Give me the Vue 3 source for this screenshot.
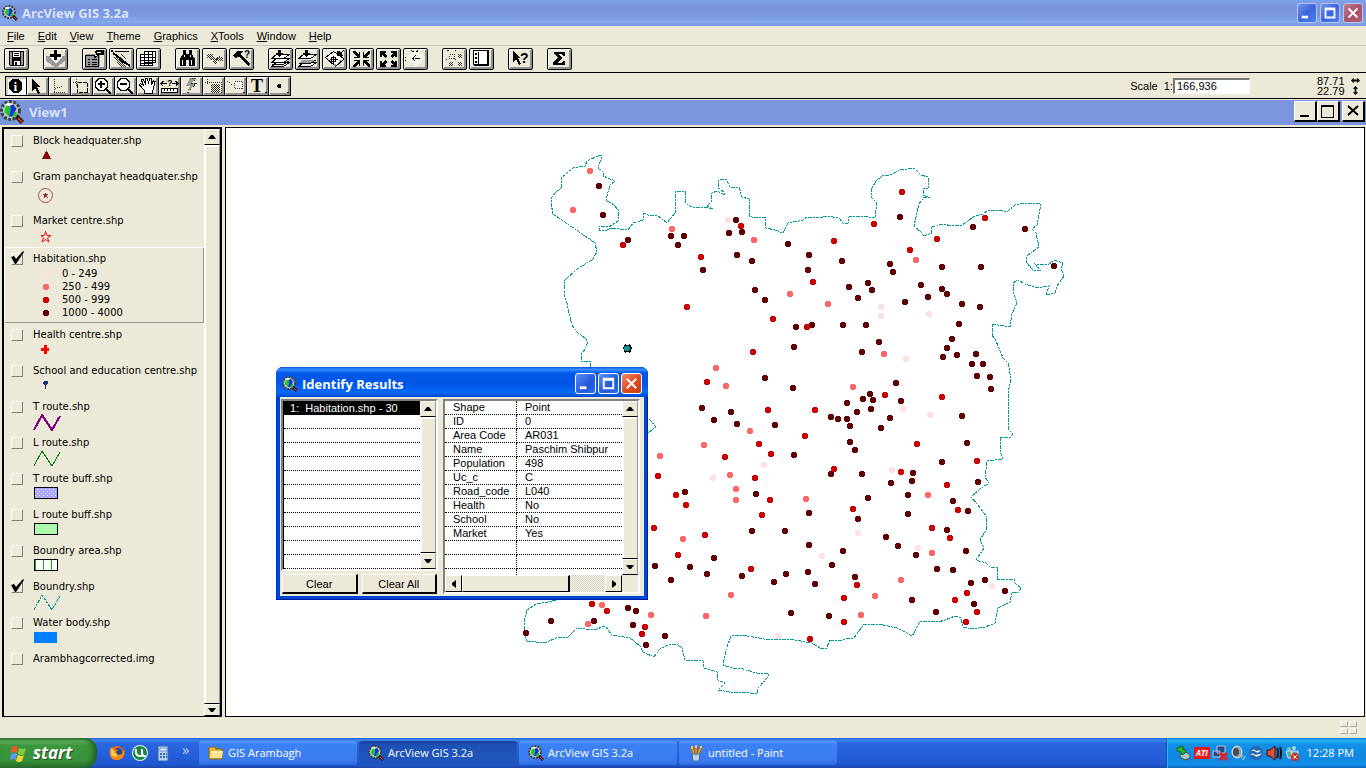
<script setup>
import { ref } from 'vue'

const menus = ['File', 'Edit', 'View', 'Theme', 'Graphics', 'XTools', 'Window', 'Help']

// Each shape is [class, path data]; classes: s line, m thick line, b solid, w outlined white, g dotted grey line, q grey solid, h hatched
const buttonGroups = [
  [{ name: 'Save Project', p: [['b', 'M4 2h15v15H5l-1-1z'], ['q', 'M5 3h2v13H5zM16 3h2v13h-2z'], ['wf', 'M8 3h7v5H8zM9 12h6v4H9z'], ['b', 'M9 4h5v1H9zM9 6h5v1H9zM10 13h2v3h-2z']] }],
  [{ name: 'Add Theme', p: [['q', 'M2 7h4l6 6 6-6h3v5l-9 7-10-7z'], ['wf', 'M5 8l7 6 6-6-1-2H7z'], ['b', 'M10 1h3v4h4v3h-4v3h-3V8H6V5h4z']] }],
  [
    { name: 'Theme Properties', p: [['q', 'M3 5h14v12H3z'], ['s', 'M2.5 6.5h13v11h-13zM5 10.5h2M9 10.5h5M5 13.5h2M9 13.5h5M5 15.5h2M9 15.5h5'], ['b', 'M11 3l3-2h7v5h-6l-1 2-3 1V6h2V4z'], ['wf', 'M14 3h4v1h-4zM12 6h2v1h-2z']] },
    { name: 'Edit Legend', p: [['s', 'M1.5 1.5h1v1h-1zM5 2.5h14'], ['h', 'M3 8h3l11 10h-6zM10 5h3l4 5h-3z'], ['m', 'M3 4L20 17'], ['b', 'M8 8l5 3 2 4-5-3z']] },
    { name: 'Open Theme Table', p: [['w', 'M7.5 2.5h11v11h-11zM3.5 5.5h12v11h-12z'], ['s', 'M4 8.5h15M4 11.5h15M4 14.5h12M7.5 5v12M11.5 3v14M15.5 3v14']] }
  ],
  [
    { name: 'Find', p: [['b', 'M7 1h3v4h3V1h3v4l3 5v7h-6v-6h-3v6H4v-7l3-5z'], ['wf', 'M6 11h1v5H6zM15 11h1v5h-1zM8 6h1v2H8zM14 6h1v2h-1z']] },
    { name: 'Locate Address', p: [['h', 'M4 5h6v4H4zM7 8h4v3H7zM10 9h4v4l-2 2-2-3zM14 8h6v4h-4l-2-1z'], ['g', 'M5.5 5.5l6 6 7-5']] },
    { name: 'Query Builder', p: [['b', 'M3 6l4-4h6l-2 2v2l9 9-2 2-9-9-4 1z'], ['t', '?', 14, 9, 10]] }
  ],
  [
    { name: 'Zoom to Full Extent', p: [['w', 'M2.5 17.5l5-4h13l-6 4zM2.5 13.5l5-4h13l-6 4zM2.5 9.5l5-4h13l-6 4z'], ['s', 'M2.5 15.5h12l6-4'], ['b', 'M9 1h3v3h3l-5 4-4-4h3z']] },
    { name: 'Zoom to Active Theme', p: [['w', 'M2.5 17.5l5-4h13l-6 4zM2.5 9.5l5-4h13l-6 4z'], ['q', 'M3 14l4-3h13l-5 3z'], ['s', 'M2.5 14.5h12l6-4'], ['b', 'M9 1h3v3h3l-5 4-4-4h3z']] },
    { name: 'Zoom to Selected', p: [['w', 'M2.5 8.5l8-6 3 2 7 5v1l-8 7z'], ['q', 'M4 9h2v1H4zM16 11h3v1h-3zM11 15h2v2h-2z'], ['s', 'M8.5 8.5h4v4h-4zM10.5 7v8M7 10.5h8'], ['b', 'M14 2h2l2 1 3-2-2 3 1 3h-6z']] },
    { name: 'Zoom In', p: [['b', 'M3 2h2l4 4V3h1v6H4V8h3L3 4zM20 2h-2l-4 4V3h-1v6h6V8h-3l4-4zM3 18h2l4-4v3h1v-6H4v1h3l-4 4zM20 18h-2l-4-4v3h-1v-6h6v1h-3l4 4z']] },
    { name: 'Zoom Out', p: [['b', 'M3 2h6v2H7l3 3-2 2-3-3v2H3zM20 2h-6v2h2l-3 3 2 2 3-3v2h2zM3 18h6v-2H7l3-3-2-2-3 3v-2H3zM20 18h-6v-2h2l-3-3 2-2 3 3v-2h2z']] },
    { name: 'Zoom to Previous', p: [['hw', 'M2 9l7-6h6l6 6-8 9h-3z'], ['s', 'M7.5 1.5l3 2M12.5 2.5l2-1M8 9.5h2M11 9.5h5M11.5 6.5l-3 3 3 3M1.5 8v1M1.5 11v1']] }
  ],
  [
    { name: 'Select Features Using Shape', p: [['g', 'M6.5 5.5h5v4h-5z'], ['h', 'M15 5h4v4h-4zM6 13h4v4H6zM15 13h4v4h-4z'], ['s', 'M4 1.5h2M12 1.5h1M3.5 10v1M12.5 10v1']] },
    { name: 'Clear Selected Features', p: [['b', 'M3 1h16v16H5l-2-1z'], ['wf', 'M4 2h13v13H4z'], ['b', 'M5 4h2v2H5zM5 8h2v2H5zM5 12h2v2H5zM8 3h1v12H8z']] }
  ],
  [{ name: 'Help', p: [['b', 'M4 2l8 7H9l3 6-2 1-3-6-3 3z'], ['t', '?', 11, 14, 14]] }],
  [{ name: 'Summarize', p: [['b', 'M6 3h11v4h-2l-1-2h-4l4 4-4 5h4l1-2h2v4H5v-3l5-4-4-4z']] }]
]

const tools = [
  { name: 'Identify', on: true, p: [['b', 'M7 2h6l4 4v6l-4 4H7l-4-4V6z'], ['ti', 'i', 8, 14, 14]] },
  { name: 'Pointer', p: [['b', 'M5 2l9 8h-4l3 6-2 1-3-6-3 3z']] },
  { name: 'Vertex Edit', p: [['g', 'M5.5 2v13M6 11.5l7-2M5 15.5h12']] },
  { name: 'Select Feature', p: [['g', 'M2 5.5h6M5.5 2v8'], ['d', 'M6.5 5.5h10v10h-10z']] },
  { name: 'Zoom In Tool', p: [['w', 'M6 1.5h5l3.5 3.5v5L11 13.5H6L2.5 10V5z'], ['m', 'M5 7h7M8 4v7M13 12l5 5']] },
  { name: 'Zoom Out Tool', p: [['w', 'M6 1.5h5l3.5 3.5v5L11 13.5H6L2.5 10V5z'], ['m', 'M5 7h7M13 12l5 5']] },
  { name: 'Pan', p: [['w', 'M7.5 16.5v-3L2.5 8l1-1.5 3 2L4.5 3l2-.5 2 5V1h2l1 6 1-5.5h2v6l2-4 1.5 1-3 12.5z']] },
  { name: 'Measure', p: [['w', 'M2.5 11.5h16v4h-16z'], ['s', 'M5.5 12v2M8.5 12v2M11.5 12v2M14.5 12v2M2 6.5h6M13 6.5h6M4.5 4L2 6.5l2.5 3M16.5 4L19 6.5l-2.5 3'], ['t', '?', 8, 9, 9]] },
  { name: 'Hot Link', p: [['q', 'M9 1h6l-4 5h4l-9 10 3-7H5z'], ['g', 'M9 1.5h6l-4 5h4l-9 10']] },
  { name: 'Select by Area', p: [['h', 'M8 7h9v9H8z'], ['g', 'M2 5.5h16M4.5 2v6M18.5 5v11']] },
  { name: 'Label', p: [['hw', 'M9 5h8v7H9z'], ['g', 'M2.5 4.5l6 4M9.5 4.5h8v7h-8z'], ['b', 'M17 15h3l-1 1h-1z']] },
  { name: 'Text', p: [['ts', 'T', 4, 15, 18], ['b', 'M17 15h3l-1 1h-1z']] },
  { name: 'Draw Point', p: [['b', 'M9 7h2l1 1v2l-1 1H9l-1-1V8zM17 15h3l-1 1h-1z']] }
]

const layers = ref([
  { name: 'Block headquater.shp', on: false, sym: 'triangle' },
  { name: 'Gram panchayat headquater.shp', on: false, sym: 'ring', size: 'tall' },
  { name: 'Market centre.shp', on: false, sym: 'star', size: 'mid' },
  { name: 'Habitation.shp', on: true, active: true, size: 'classes' },
  { name: 'Health centre.shp', on: false, sym: 'cross' },
  { name: 'School and education centre.shp', on: false, sym: 'pin' },
  { name: 'T route.shp', on: false, sym: 'zig', color: 'purple' },
  { name: 'L route.shp', on: false, sym: 'zig', color: 'green' },
  { name: 'T route buff.shp', on: false, sym: 'box', color: 'violet' },
  { name: 'L route buff.shp', on: false, sym: 'box', color: 'lime' },
  { name: 'Boundry area.shp', on: false, sym: 'box', color: 'bars' },
  { name: 'Boundry.shp', on: true, sym: 'zig', color: 'teal' },
  { name: 'Water body.shp', on: false, sym: 'water' },
  { name: 'Arambhagcorrected.img', on: false }
])

const classes = [['l', '0 - 249'], ['p', '250 - 499'], ['r', '500 - 999'], ['k', '1000 - 4000']]

// Habitations by population class, "x,y" in window coordinates
const habitations = {
  l: '728,220 881,307 881,316 929,314 906,359 903,409 713,478 764,465 858,533 822,556 778,636 930,415 892,470 918,548 992,586',
  p: '590,171 573,210 672,229 754,240 790,294 716,368 726,386 916,260 828,304 884,354 853,387 750,431 704,445 660,456 730,475 736,489 736,500 806,499 683,539 731,595 706,616 651,615 861,615 875,596 928,495 932,553 901,580 602,605 588,624',
  k: '599,186 603,215 628,240 671,236 684,236 678,245 703,270 736,220 729,233 742,232 737,255 752,261 755,290 765,300 788,244 796,327 794,347 765,378 793,388 900,217 809,255 842,261 808,270 890,264 893,272 973,227 1025,229 942,267 981,267 1054,266 849,287 868,283 872,290 858,298 921,285 928,297 942,289 947,294 905,302 962,304 980,307 959,324 812,325 843,325 866,325 879,342 862,352 952,339 947,348 943,357 957,355 976,354 972,364 983,364 977,376 990,377 991,389 870,394 863,399 873,400 847,403 896,383 901,401 871,409 702,408 714,420 731,412 737,424 775,425 756,494 752,531 831,417 838,419 847,419 850,426 857,412 850,442 855,450 794,455 831,474 862,474 809,513 785,531 809,545 868,498 858,519 843,551 832,565 808,572 815,584 786,574 774,582 742,576 714,558 707,574 690,567 685,492 655,566 671,580 665,636 646,645 791,613 829,616 855,577 890,418 881,428 962,416 967,443 942,462 913,473 912,481 891,483 908,495 978,482 953,501 968,511 908,514 947,530 966,551 916,555 886,537 898,546 937,569 953,570 971,583 985,580 1005,591 974,604 936,612 912,600 594,621 551,621 526,633 628,608 636,611 633,625',
  r: '623,245 701,257 687,307 741,226 773,319 753,352 707,382 902,192 874,224 834,241 813,282 910,250 937,239 985,218 807,327 885,395 942,397 815,410 768,410 759,444 771,454 725,457 658,476 755,478 770,500 762,515 805,436 834,469 853,509 751,569 678,555 705,535 676,495 686,505 654,528 645,627 642,634 844,598 844,622 857,585 810,639 977,461 917,444 901,472 947,485 958,510 932,528 950,538 967,593 977,612 966,622 955,600 592,604 607,611'
}
const points = Object.entries(habitations).flatMap(([k, list]) =>
  list.split(' ').map((xy) => {
    const [x, y] = xy.split(',').map(Number)
    return { k, d: `M${x - 2} ${y - 3}h4v1h1v4h-1v1h-4v-1h-1v-4h1z` }
  })
)

const boundary =
  '590,367 590,361 581,361 581,355 585,349 588,342 585,338 578,333 572,325 569,313 567,303 564,294 565,280 577,269 592,260 597,252 595,243 588,238 553,214 551,203 551,198 557,191 562,188 561,178 573,168 585,166 587,161 600,155 602,156 598,168 603,172 603,176 608,178 615,181 610,185 606,200 614,205 619,211 618,221 609,227 599,226 599,230 607,230 612,228 628,230 633,223 643,220 644,213 648,215 657,215 667,223 675,213 676,191 685,191 685,202 688,205 692,207 705,207 713,209 707,206 711,202 712,193 717,191 725,195 724,192 718,188 719,180 726,179 730,187 739,187 742,197 749,199 749,216 755,218 765,217 766,228 775,230 783,233 788,223 799,221 803,220 807,217 818,218 827,216 839,218 843,223 848,223 849,217 860,216 875,218 877,203 871,197 871,189 877,180 884,175 890,175 900,170 914,168 921,175 928,177 928,188 923,189 923,195 930,198 924,197 919,204 914,226 921,232 923,236 932,233 931,227 942,224 953,226 962,225 975,216 983,214 988,210 1003,211 1008,211 1015,205 1025,203 1041,204 1037,225 1032,229 1036,233 1039,247 1027,256 1026,262 1033,270 1040,270 1035,264 1048,265 1054,260 1063,263 1061,268 1064,276 1057,286 1055,293 1046,295 1049,286 1037,288 1025,284 1018,280 1013,283 1014,294 1017,303 1012,314 1010,327 992,324 992,335 996,341 1003,358 1008,363 1011,379 1008,393 1009,430 1013,434 1010,438 1000,437 1000,452 1003,459 987,461 985,477 989,483 980,489 971,497 977,504 987,517 986,530 980,540 984,548 976,560 986,563 990,567 998,567 997,580 1014,579 1015,583 1021,588 1019,592 1012,593 1010,602 998,608 995,623 985,627 973,629 963,627 961,618 955,616 945,620 938,622 920,621 914,633 912,636 905,632 897,628 883,625 864,624 854,638 847,638 840,641 830,640 826,649 820,648 812,643 795,640 780,639 770,640 753,637 741,635 731,636 726,650 723,665 732,668 739,668 757,673 767,673 769,676 758,688 757,694 740,692 729,692 718,690 725,683 718,680 717,672 704,668 703,661 685,660 682,648 677,644 668,645 660,649 654,657 643,652 640,646 630,638 612,635 605,626 594,630 577,628 568,637 556,638 545,643 527,641 524,634 524,622 527,610 536,604 548,602 560,599'

const attributes = [
  ['Shape', 'Point'], ['ID', '0'], ['Area Code', 'AR031'], ['Name', 'Paschim Shibpur'], ['Population', '498'],
  ['Uc_c', 'C'], ['Road_code', 'L040'], ['Health', 'No'], ['School', 'No'], ['Market', 'Yes'], ['', ''], ['', '']
]
const scale = ref('166,936')
const tasks = [
  { name: 'GIS Arambagh', icon: 'folder' },
  { name: 'ArcView GIS 3.2a', icon: 'logo', on: true },
  { name: 'ArcView GIS 3.2a', icon: 'logo' },
  { name: 'untitled - Paint', icon: 'paint' }
]
</script>

<template>
  <div class="desktop">
    <svg class="defs" aria-hidden="true">
      <defs>
        <pattern id="dots" width="2" height="2" patternUnits="userSpaceOnUse"><path d="M0 0h1v1H0zM1 1h1v1H1z" fill="#333" /></pattern>
        <pattern id="dotsw" width="2" height="2" patternUnits="userSpaceOnUse"><path d="M0 0h1v1H0zM1 1h1v1H1z" fill="#fff" /></pattern>
        <pattern id="speck" width="4" height="4" patternUnits="userSpaceOnUse"><path d="M0 0h1v1H0zM2 2h1v1H2z" fill="#fff" /></pattern>
      </defs>
      <symbol id="logo" viewBox="0 0 16 16">
        <circle cx="7" cy="7" r="6" fill="#b8c4c4" stroke="#3b4440" stroke-width="2" stroke-dasharray="2 1" />
        <path d="M4 4h3v3l-1 4-3-3zM9 8h2v3H8z" fill="#19c82e" /><path d="M7 3h2l2 3-2 3-1 2H6l1-4z" fill="#1030d8" /><path d="M3 3l2-1 4 1-4 1z" fill="#fff" />
        <path d="M11 11l4 4" stroke="#301818" stroke-width="3" /><path d="M12 12l3 3" stroke="#d84020" stroke-width="1" />
      </symbol>
      <symbol id="folder" viewBox="0 0 16 16"><path d="M1 3l1-1h5l1 2h6v10H2l-1-1z" fill="#e7b63b" stroke="#8a6410" /><path d="M2 13l1-7h12l-1 7z" fill="#ffe58a" /><path d="M3 7h11" stroke="#fff7c8" /></symbol>
      <symbol id="paint" viewBox="0 0 16 16"><path d="M4 9h8l-1 7H5z" fill="#bcd5ed" stroke="#496482" /><path d="M5 9L3 3l2-1 2 6M7 8V2h2v6M9 8l3-6 2 1-3 6" fill="#e8a534" stroke="#a8691d" /><path d="M3 1h2v3H3zM7 0h2v3H7zM12 1h2v2h-2z" fill="#f0c060" /></symbol>
    </svg>

    <header class="titlebar">
      <svg class="logo16"><use href="#logo" /></svg>
      <h1>ArcView GIS 3.2a</h1>
      <div class="winbtns">
        <button class="xp" aria-label="Minimize"><svg viewBox="0 0 20 20"><path d="M4 13h7v3H4z" /></svg></button>
        <button class="xp" aria-label="Maximize"><svg viewBox="0 0 20 20"><path d="M4 4h12v12H4zM6 7v7h8V7z" fill-rule="evenodd" /></svg></button>
        <button class="xp close" aria-label="Close"><svg viewBox="0 0 20 20"><path d="M5 5l10 10M15 5L5 15" class="x" /></svg></button>
      </div>
    </header>

    <nav class="menu"><a v-for="m in menus" :key="m" href="#"><u>{{ m[0] }}</u>{{ m.slice(1) }}</a></nav>

    <div class="toolbar">
      <div v-for="(g, i) in buttonGroups" :key="i" class="group">
        <button v-for="b in g" :key="b.name" class="tb" :aria-label="b.name">
          <svg viewBox="0 0 23 20">
            <template v-for="(s, j) in b.p" :key="j">
              <text v-if="s[0] === 't'" :x="s[2]" :y="s[3]" :font-size="s[4]">{{ s[1] }}</text>
              <path v-else :class="s[0]" :d="s[1]" />
            </template>
          </svg>
        </button>
      </div>
    </div>

    <div class="toolrow">
      <div class="tools">
        <button v-for="b in tools" :key="b.name" class="tool" :class="{ on: b.on }" :aria-label="b.name">
          <svg viewBox="0 0 21 18">
            <template v-for="(s, j) in b.p" :key="j">
              <text v-if="s[0][0] === 't'" :class="s[0]" :x="s[2]" :y="s[3]" :font-size="s[4]">{{ s[1] }}</text>
              <path v-else :class="s[0]" :d="s[1]" />
            </template>
          </svg>
        </button>
      </div>
      <label for="scale">Scale&nbsp; 1:</label>
      <input id="scale" v-model="scale" class="scale" type="text" />
      <div class="coords">
        <span>87.71</span><svg viewBox="0 0 10 10"><path d="M0 5l3-3v2h4V2l3 3-3 3V6H3v2z" /></svg>
        <span>22.79</span><svg viewBox="0 0 10 10"><path d="M5 0l3 3H6v4h2l-3 3-3-3h2V3H2z" /></svg>
      </div>
    </div>

    <div class="docbar">
      <svg class="logo24"><use href="#logo" /></svg>
      <h2>View1</h2>
      <div class="docbtns">
        <button aria-label="Minimize view"><svg viewBox="0 0 20 18"><path d="M5 13h9v2H5z" /></svg></button>
        <button aria-label="Maximize view"><svg viewBox="0 0 20 18"><path d="M3 3h13v13H3zM4 5v10h11V5z" fill-rule="evenodd" /></svg></button>
        <button aria-label="Close view"><svg viewBox="0 0 20 18"><path d="M5 4l10 9M15 4L5 13" stroke="#000" stroke-width="2" /></svg></button>
      </div>
    </div>

    <main class="doc">
      <aside class="toc">
        <ul>
          <li v-for="(l, i) in layers" :key="l.name" :class="[l.size, { active: l.active }]">
            <span class="tick">
              <input :id="'layer' + i" v-model="l.on" type="checkbox" />
              <svg v-if="l.on" viewBox="0 0 15 14"><path d="M1 6l3-1 2 3 7-8 1 1-8 12H5z" /></svg>
            </span>
            <div class="info">
              <label :for="'layer' + i">{{ l.name }}</label>
              <svg v-if="l.sym" class="sym" viewBox="0 0 30 20">
                <path v-if="l.sym === 'triangle'" d="M13 4L9 12h9l-4-8z" fill="#8a0808" />
                <g v-if="l.sym === 'ring'"><circle cx="12.5" cy="9.5" r="7" fill="none" stroke="#a65050" shape-rendering="auto" /><path d="M12 7h1v1h2l-1 2 1 2-2-1-2 1v-2L9 8h3z" fill="#8c3030" /></g>
                <path v-if="l.sym === 'star'" d="M12.5 4.5l1.5 4h4l-3.5 2.5 1.5 4-3.5-2.5L9 15l1.5-4L8 8.500h3.500z" fill="none" stroke="#e01010" shape-rendering="auto" />
                <path v-if="l.sym === 'cross'" d="M11 4h3v3h2v3h-2v3h-3v-3H8V7h3z" fill="#f00" />
                <path v-if="l.sym === 'pin'" d="M11 4h3l1 1v2l-2 1v4h-1V8l-2-1V5z" fill="#1d2f80" />
                <path v-if="l.sym === 'zig'" :class="l.color" d="M1 17L9 2l10 15 8-14" />
                <g v-if="l.sym === 'box'">
                  <path d="M1.5 2.5h23v11h-23z" :class="l.color" stroke="#000" />
                  <path v-if="l.color !== 'bars'" d="M2 3h22v10H2z" fill="url(#speck)" />
                  <path v-else d="M2.5 3v10M10.5 3v10M18.5 3v10" stroke="#00c000" />
                </g>
                <path v-if="l.sym === 'water'" d="M1 3h23v11H1z" fill="#0080ff" />
              </svg>
              <dl v-if="l.active">
                <div v-for="c in classes" :key="c[1]">
                  <dt><svg viewBox="0 0 6 6"><path :class="c[0]" d="M1 0h4v1h1v4H5v1H1V5H0V1h1z" /></svg></dt>
                  <dd>{{ c[1] }}</dd>
                </div>
              </dl>
            </div>
          </li>
        </ul>
        <div class="vscroll">
          <button aria-label="Scroll legend up"><svg viewBox="0 0 8 4"><path d="M3 0h2l3 4H0z" /></svg></button>
          <div class="thumb"></div>
          <button class="cut" aria-label="Scroll legend down"><svg viewBox="0 0 8 4"><path d="M0 0h8L5 4H3z" /></svg></button>
        </div>
      </aside>

      <section class="map" aria-label="Map">
        <svg class="canvas" aria-hidden="true">
          <g transform="translate(-226 -128)">
            <polyline class="edge" :points="boundary" />
            <polyline class="edge" points="649,419 656,427 648,433" />
            <path v-for="(p, i) in points" :key="i" :class="p.k" :d="p.d" />
            <path d="M625 344h1v1h3v-1h1v1h1v2h1v2h-1v3h-1v1h-1v-1h-3v1h-1v-1h-1v-3h-1v-2h1v-2h1z" fill="#000" />
            <path d="M625 346h4v1h1v3h-1v1h-4v-1h-1v-3h1z" fill="#009696" />
          </g>
        </svg>

        <section class="dialog" role="dialog" aria-labelledby="dlg">
          <div class="dlgtitle">
            <svg class="logo16"><use href="#logo" /></svg>
            <h2 id="dlg">Identify Results</h2>
            <div class="winbtns">
              <button class="xp" aria-label="Minimize results"><svg viewBox="0 0 20 20"><path d="M4 13h7v3H4z" /></svg></button>
              <button class="xp" aria-label="Maximize results"><svg viewBox="0 0 20 20"><path d="M4 4h12v12H4zM6 7v7h8V7z" fill-rule="evenodd" /></svg></button>
              <button class="xp close" aria-label="Close results"><svg viewBox="0 0 20 20"><path d="M5 5l10 10M15 5L5 15" class="x" /></svg></button>
            </div>
          </div>
          <div class="dlgbody">
            <div class="left">
              <div class="listbox">
                <ul><li class="sel">1:&nbsp; Habitation.shp - 30</li><li v-for="n in 11" :key="n"></li></ul>
                <div class="vscroll">
                  <button aria-label="Scroll list up"><svg viewBox="0 0 8 4"><path d="M3 0h2l3 4H0z" /></svg></button>
                  <div class="thumb"></div>
                  <button aria-label="Scroll list down"><svg viewBox="0 0 8 4"><path d="M0 0h8L5 4H3z" /></svg></button>
                </div>
              </div>
              <div class="actions"><button>Clear</button><button>Clear All</button></div>
            </div>
            <div class="right">
              <div class="grid">
                <table>
                  <tbody>
                    <tr v-for="(a, i) in attributes" :key="i"><th scope="row">{{ a[0] }}</th><td>{{ a[1] }}</td></tr>
                    <tr class="rest"><th></th><td></td></tr>
                  </tbody>
                </table>
                <div class="vscroll">
                  <button aria-label="Scroll attributes up"><svg viewBox="0 0 8 4"><path d="M3 0h2l3 4H0z" /></svg></button>
                  <div class="thumb"></div>
                  <button aria-label="Scroll attributes down"><svg viewBox="0 0 8 4"><path d="M0 0h8L5 4H3z" /></svg></button>
                </div>
              </div>
              <div class="hscroll">
                <button aria-label="Scroll left"><svg viewBox="0 0 4 8"><path d="M4 0v8L0 5V3z" /></svg></button>
                <div class="thumb"></div><div class="track"></div>
                <button aria-label="Scroll right"><svg viewBox="0 0 4 8"><path d="M0 0v8l4-3V3z" /></svg></button>
              </div>
            </div>
          </div>
        </section>
      </section>
    </main>

    <div class="status"><span class="grip"><i></i><i></i><i></i><i></i></span></div>

    <footer class="taskbar">
      <button class="start">
        <svg viewBox="0 0 20 20"><path d="M3 4q3-2 6 0L8 10q-3-2-6 0z" fill="#f0592b" /><path d="M10 5q3 2 7 0l-2 6q-3 2-6 0z" fill="#7fcf3a" /><path d="M2 11q3-2 6 0l-1 6q-3-2-6 0z" fill="#5b9bf5" /><path d="M9 12q3 2 6 0l-2 6q-3 2-6 0z" fill="#fbd334" /></svg>
        <span>start</span>
      </button>
      <div class="quick">
        <svg viewBox="0 0 16 16"><circle cx="8" cy="8" r="7" fill="#e8641a" /><circle cx="9" cy="7" r="4" fill="#204c8c" /><path d="M1 4l2-2 2 2 4 1-2 2 2 3 4-1 2-5c2 6-1 11-7 11S0 11 1 4z" fill="#f08a1c" /><path d="M2 4l2 1 2 3 3 3-4 1-3-3z" fill="#ffcf4a" /></svg>
        <svg viewBox="0 0 16 16"><circle cx="8" cy="8" r="8" fill="#e9f7ee" /><circle cx="8" cy="8" r="7" fill="#168744" /><path d="M4 4v3q0 4 4 4t2-3V4M10 8q0 4 4 3" fill="none" stroke="#fff" stroke-width="2" /></svg>
        <svg viewBox="0 0 16 16"><path d="M3 1h10v15H3z" fill="#bcd2f3" stroke="#3866b2" /><path d="M5 3h7v3H5z" fill="#edf7ff" stroke="#6c91cc" /><path d="M5 8h2v2H5zM8 8h2v2H8zM11 8h1v2h-1zM5 11h2v2H5zM8 11h2v2H8zM11 11h1v2h-1z" fill="#426ca6" /></svg>
        <span>»</span>
      </div>
      <button v-for="(t, i) in tasks" :key="i" class="task" :class="{ on: t.on }">
        <svg><use :href="'#' + t.icon" /></svg><span>{{ t.name }}</span>
      </button>
      <div class="tray">
        <svg viewBox="0 0 16 16"><path d="M4 10l6-3 4 3v3l-5 2-5-3z" fill="#b3c4c9" stroke="#34543f" /><path d="M1 3l6-2v3l3 1-1 3-3 2-1-3-4-1z" fill="#26b52b" stroke="#126018" /></svg>
        <span class="ati"><b>ATI</b></span>
        <svg viewBox="0 0 16 16"><path d="M5 1h8v7H5zM1 6h7v6H1z" fill="#244b85" stroke="#b9c7dd" /><path d="M8 8l7 7M15 8l-7 7" stroke="#e02020" stroke-width="3" /></svg>
        <svg viewBox="0 0 16 16"><ellipse cx="7" cy="7" rx="5" ry="6" fill="#9da7ab" stroke="#e0e5e7" /><ellipse cx="6" cy="7" rx="3" ry="4" fill="#434f57" /><path d="M12 15q3-1 3-4M11 13l2-3" fill="none" stroke="#bfe0ff" /></svg>
        <svg viewBox="0 0 16 16"><circle cx="8" cy="8" r="7" fill="#236ab0" /><path d="M3 6q3-3 5 0 2 0 5-1-3 4-5 2-2-2-5-1zM2 10q3-3 5 0 3 0 7-2-4 5-7 3-2-2-5-1z" fill="#fff" /></svg>
        <svg viewBox="0 0 16 16"><path d="M1 5h3l5-4v14l-5-4H1z" fill="#e05032" stroke="#451010" /><path d="M11 3q2 5 0 10M14 2q2 6 0 12" fill="none" stroke="#22110d" stroke-width="2" /></svg>
        <svg viewBox="0 0 16 16"><circle cx="5" cy="4" r="2" fill="#7ac9ae" /><circle cx="10" cy="3" r="2" fill="#a9d8ef" /><path d="M2 6h6v7H4zM7 6h7v6H8z" fill="#65a99c" stroke="#bdeafa" /><circle cx="11" cy="12" r="4" fill="#d62a19" /><path d="M9 10l4 4M13 10l-4 4" stroke="#fff" /></svg>
        <time>12:28 PM</time>
      </div>
    </footer>
  </div>
</template>

<style>
body { margin: 0; background: #ece9d8; }
</style>

<style scoped>
* { box-sizing: border-box; }
.desktop { height: 100vh; display: flex; flex-direction: column; overflow: hidden; background: #ece9d8; color: #000; font: 11px/14px "Liberation Sans", sans-serif; }
.defs { position: absolute; width: 0; height: 0; }
button { padding: 0; margin: 0; border: 0; background: #ece9d8; font: inherit; color: inherit; }
svg { display: block; flex: none; }
h1, h2 { margin: 0; font: bold 13px/20px "Open Sans", sans-serif; }
ul, dl, dd { margin: 0; padding: 0; list-style: none; }

.titlebar { flex: none; height: 26px; display: flex; align-items: center; gap: 4px; padding: 0 3px 0 2px; color: #dbe5fb; background: linear-gradient(#7ba4ec 0, #7993dc 25%, #7b97e0 55%, #82a9ec 85%, #7b97df 100%); }
.logo16 { width: 16px; height: 16px; }
.logo24 { width: 24px; height: 24px; }
.winbtns { margin-left: auto; display: flex; gap: 3px; }
.xp { width: 20px; height: 20px; border: 1px solid #b9c9f3; border-radius: 3px; background: linear-gradient(135deg, #6f95ef, #3b66dc 50%, #4a80ee); }
.xp svg { width: 18px; height: 18px; fill: #fff; }
.xp .x { stroke: #fff; stroke-width: 2; }
.xp.close { background: linear-gradient(135deg, #c47c8e, #aa5068 50%, #b35d70); }
.dialog .xp { width: 21px; height: 21px; border-color: #fff; background: linear-gradient(135deg, #5d8ff5, #2356d8 60%, #2f6cf0); }
.dialog .xp.close { background: linear-gradient(135deg, #f0896a, #dc4a20 55%, #c83a10); }
.dialog .xp svg { width: 19px; height: 19px; }

.menu { flex: none; height: 20px; display: flex; gap: 13px; align-items: center; padding: 0 7px; border-bottom: 1px solid #ccc8c0; }
.menu a { color: #000; text-decoration: none; }
.toolbar { flex: none; height: 27px; display: flex; gap: 14px; padding: 2px 4px 0; border-bottom: 1px solid #000; }
.group { display: flex; gap: 2px; }
.tb { width: 25px; height: 22px; border: 1px solid #000; border-radius: 2px; box-shadow: inset 1px 1px #fff, inset -2px -2px #909090; }
.tb svg { width: 23px; height: 20px; shape-rendering: crispEdges; }
.toolrow { flex: none; height: 26px; display: flex; align-items: center; padding: 0 6px 0 5px; border-bottom: 1px solid #000; }
.tools { display: flex; margin-right: auto; }
.tool { width: 22px; height: 20px; border: 1px solid #000; border-left-width: 0; box-shadow: inset 1px 1px #fff, inset -2px -2px #909090; }
.tool:first-child { border-left-width: 1px; }
.tool.on { background: #fff; box-shadow: inset 2px 2px #d0cec4; }
.tool svg { width: 21px; height: 18px; shape-rendering: crispEdges; }
.tool:first-child svg { width: 20px; }
.s { fill: none; stroke: #000; }
.m { fill: none; stroke: #000; stroke-width: 2; }
.b { fill: #000; }
.w { fill: #fff; stroke: #000; }
.wf { fill: #fff; }
.q { fill: #999; }
.g { fill: none; stroke: #333; stroke-dasharray: 1 1; }
.d { fill: none; stroke: #000; stroke-dasharray: 4 1; }
.h { fill: url(#dots); }
.hw { fill: url(#dotsw); }
text { font-family: "Liberation Sans", sans-serif; font-weight: bold; }
text.ti { fill: #fff; font-family: "Liberation Serif", serif; }
text.ts { font-family: "Liberation Serif", serif; }
.scale { width: 77px; height: 16px; margin-right: 67px; padding: 0 2px; border: 1px solid; border-width: 2px 1px 1px 2px; border-color: #777 #fff #fff #777; background: #fff; font: inherit; }
.coords { display: grid; grid-template-columns: 34px 9px; line-height: 10px; align-items: center; }
.coords svg { width: 9px; height: 9px; }

.docbar { flex: none; height: 28px; display: flex; align-items: center; gap: 5px; padding: 0 1px 2px 0; border: solid #ece9d8; border-width: 1px 0 2px; background: #7b96df; color: #dbe5fb; }
.docbtns { margin-left: auto; display: flex; }
.docbtns button { width: 23px; height: 21px; border: 1px solid; border-width: 1px 2px 2px 1px; border-color: #fff #000 #000 #fff; }
.docbtns button:last-child { margin-left: 2px; }
.docbtns svg { width: 20px; height: 18px; shape-rendering: crispEdges; }
.docbtns button:last-child svg { shape-rendering: auto; }

.doc { flex: 1; min-height: 0; display: flex; gap: 3px; padding: 0 1px 0 2px; }
.toc { flex: none; width: 220px; display: flex; border: solid #000; border-width: 2px 2px 1px 2px; overflow: hidden; font: 10px/12px "DejaVu Sans", sans-serif; }
.toc ul { flex: 1; min-width: 0; }
.toc li { display: flex; gap: 10px; height: 36px; padding: 6px 0 0 7px; white-space: nowrap; }
.toc li.tall { height: 44px; }
.toc li.mid { height: 38px; }
.toc li.classes { height: 76px; }
.toc li.active { border: 1px solid; border-color: #fff #999 #999 #fff; padding: 5px 0 0 6px; }
.tick { position: relative; flex: none; width: 12px; height: 14px; }
.tick input { appearance: none; display: block; width: 12px; height: 12px; margin: 0; border: 1px solid; border-color: #fff #808080 #808080 #fff; }
.tick svg { position: absolute; left: -1px; top: -2px; width: 15px; height: 14px; }
.info label { display: block; }
.sym { width: 30px; height: 20px; shape-rendering: crispEdges; }
.tall .sym { margin-top: 3px; }
.purple { fill: none; stroke: #800080; stroke-width: 2; }
.green { fill: none; stroke: #008000; }
.teal { fill: none; stroke: #009999; stroke-dasharray: 3 1; }
.violet { fill: #a9a4fb; }
.lime { fill: #a3fba3; }
.bars { fill: #fff; }
dl div { display: flex; align-items: center; height: 13px; padding-left: 10px; }
dl { padding-top: 2px; }
dt { width: 19px; }
dt svg { width: 6px; height: 6px; }
.l { fill: #ffe0e0; }
.p { fill: #ff6666; }
.r { fill: #cc0000; }
.k { fill: #600000; }

.vscroll { flex: none; width: 16px; display: flex; flex-direction: column; background: #ece9d8; }
.vscroll button { flex: none; height: 16px; display: grid; place-items: center; border: 1px solid; border-color: #fff #999 #000 #fff; }
.vscroll button svg { width: 8px; height: 4px; }
.vscroll .thumb { flex: 1; border: 1px solid; border-color: #fff #999 #000 #fff; box-shadow: inset 1px 1px #fff; }
.vscroll .cut { height: 12px; }

.map { flex: 1; position: relative; overflow: hidden; background: #fff; border: 1px solid #000; }
.canvas { width: 100%; height: 100%; shape-rendering: crispEdges; }
.edge { fill: none; stroke: #009999; stroke-width: 1; stroke-dasharray: 4 1 2 1; }

.dialog { position: absolute; left: 50px; top: 239px; width: 372px; padding: 0 4px 4px; border-radius: 7px 7px 0 0; background: #0046d5; box-shadow: inset -1px -1px #001c9c, inset 1px 0 #0831d9; }
.dlgtitle { height: 30px; margin: 0 -4px; padding: 3px 6px 0 6px; display: flex; align-items: center; gap: 4px; border-radius: 7px 7px 0 0; color: #fff; background: linear-gradient(#0a54e0 0, #3590ff 8%, #0458e8 20%, #0255e5 55%, #0469fa 85%, #0047cc 100%); }
.dlgtitle .winbtns { gap: 2px; }
.dlgbody { display: flex; gap: 5px; padding: 2px 4px 2px 1px; background: #ece9d8; }
.left { width: 157px; }
.listbox { display: flex; height: 172px; border: 2px solid; border-color: #808080 #fff #fff #808080; background: #fff; }
.listbox ul { flex: 1; border-left: 1px solid #000; }
.listbox li { height: 14px; border-bottom: 1px dotted #000; line-height: 14px; }
.listbox .sel { background: #000; color: #fff; padding-left: 6px; white-space: nowrap; }
.actions { display: flex; gap: 4px; padding: 3px 1px 0; }
.actions button { flex: 1; height: 20px; border: solid; border-width: 1px 2px 2px 1px; border-color: #fff #000 #000 #fff; }
.right { flex: 1; border: 2px solid; border-color: #808080 #fff #fff #808080; }
.grid { display: flex; height: 174px; overflow: hidden; background: #fff; }
table { flex: 1; align-self: flex-start; border-spacing: 0; table-layout: fixed; width: 176px; }
th, td { height: 14px; padding: 0 0 0 8px; border-bottom: 1px dotted #000; font-weight: normal; text-align: left; line-height: 13px; white-space: nowrap; }
th { width: 72px; border-right: 1px dotted #000; }
.rest th, .rest td { height: 6px; border-bottom: 0; }
.hscroll { display: flex; height: 17px; padding-right: 16px; }
.hscroll button { width: 17px; display: grid; place-items: center; border: 1px solid; border-color: #fff #000 #000 #fff; }
.hscroll button svg { width: 4px; height: 8px; }
.hscroll .thumb { flex: 3; border: 1px solid; border-color: #fff #000 #000 #fff; border-right-width: 2px; }
.hscroll .track { flex: 1; background: repeating-conic-gradient(#d8d5c8 0 25%, #f5f3ea 0 50%) 0 0 / 2px 2px; }

.status { flex: none; height: 21px; display: flex; justify-content: flex-end; align-items: center; padding-right: 9px; }
.grip { display: grid; grid-template-columns: 8px 8px; gap: 1px; }
.grip i { height: 6px; border: 1px solid; border-color: #fff #aaa #aaa #fff; }

.taskbar { flex: none; height: 30px; display: flex; align-items: center; font: 11px/14px "Open Sans", sans-serif; color: #fff; background: linear-gradient(#1f5fd0 0, #3c86f0 7%, #2a67dd 18%, #245edb 60%, #2157d0 90%, #1a45a8 100%); }
.start { align-self: stretch; width: 97px; display: flex; align-items: center; gap: 4px; padding-left: 9px; border-radius: 0 12px 12px 0; color: #fff; background: linear-gradient(#2f7a2f 0, #5eac5b 10%, #3c983c 25%, #37923a 75%, #2a6f2c 100%); box-shadow: inset -4px 0 5px #24602a; font: italic bold 17px/20px "Open Sans", sans-serif; text-shadow: 1px 1px 1px #1d4a1d; }
.start svg { width: 20px; height: 20px; }
.quick { width: 102px; display: flex; align-items: center; gap: 7px; padding-left: 12px; }
.quick svg { width: 16px; height: 16px; }
.quick span { padding: 0 0 8px 4px; font-size: 15px; color: #b9d3ff; }
.task { width: 158px; height: 24px; margin-right: 2px; display: flex; align-items: center; gap: 4px; padding-left: 9px; border-radius: 3px; color: #fff; background: linear-gradient(#5c9bff 0, #3c81f3 15%, #3a7cf0 80%, #2f6ae0 100%); }
.task.on { background: linear-gradient(#17409b 0, #1e52b7 20%, #1f55bd 100%); }
.task svg { width: 16px; height: 16px; }
.tray { align-self: stretch; margin-left: auto; width: 200px; display: flex; align-items: center; gap: 2px; padding: 0 12px 0 9px; border-left: 1px solid #0a4ba8; background: linear-gradient(#0e70d0 0, #1cb0f5 8%, #1290e8 22%, #1187e2 70%, #1290ea 90%, #0c66bc 100%); box-shadow: inset 1px 0 #1fc0fa; }
.tray svg { width: 16px; height: 16px; }
.ati { flex: none; width: 16px; height: 12px; background: #e81818; font-size: 8px; line-height: 12px; text-align: center; font-style: italic; }
.tray time { margin-left: auto; white-space: nowrap; }
</style>
